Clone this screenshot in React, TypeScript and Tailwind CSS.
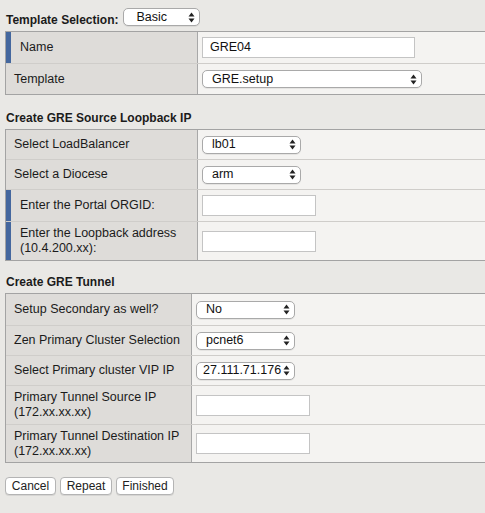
import type { ReactNode } from "react";

function Arrows() {
  return (
    <svg width="7" height="11" viewBox="0 0 7 11" className="shrink-0">
      <path d="M3.5 0.5 L6.5 4.5 L0.5 4.5 Z" fill="#222" />
      <path d="M3.5 10.5 L6.5 6.5 L0.5 6.5 Z" fill="#222" />
    </svg>
  );
}

function Select({ value, w, pl = "pl-[9px]" }: { value: string; w: string; pl?: string }) {
  return (
    <div
      className={`${w} ${pl} flex h-[18px] items-center justify-between gap-[2px] rounded-[5px] border border-[#a9a9a9] bg-white pr-[4px] text-[12.5px] leading-none text-[#111] shadow-[0_1px_0_rgba(0,0,0,0.06)]`}
    >
      <span className="whitespace-nowrap">{value}</span>
      <Arrows />
    </div>
  );
}

function Input({ value = "", w }: { value?: string; w: string }) {
  return (
    <div className={`${w} flex h-[21px] items-center border border-[#c4c4c4] bg-white px-[7px] text-[12.5px] text-[#111]`}>
      {value}
    </div>
  );
}

function Row({
  label,
  h,
  labelW,
  marked,
  last,
  children,
}: {
  label: ReactNode;
  h: string;
  labelW: string;
  marked?: boolean;
  last?: boolean;
  children: ReactNode;
}) {
  return (
    <div className={`flex ${h} ${last ? "" : "border-b border-[#cfcdca]"}`}>
      <div className={`${labelW} flex shrink-0 items-stretch border-r border-[#a8a8a8] bg-[#dedcd9]`}>
        {marked ? <div className="w-[5px] shrink-0 bg-[#44679e]" /> : null}
        <div className={`flex items-center leading-[15px] ${marked ? "pl-[9px]" : "pl-[8px]"}`}>{label}</div>
      </div>
      <div className="flex flex-1 items-center bg-[#f4f3f1] pl-[4px]">{children}</div>
    </div>
  );
}

function Table({ children }: { children: ReactNode }) {
  return (
    <div className="ml-[5px] w-[520px] border-y border-l border-[#a3a3a3]">{children}</div>
  );
}

function Heading({ children, mt }: { children: ReactNode; mt: string }) {
  return <div className={`${mt} mb-[3px] pl-[6px] text-[12px] font-bold leading-[16px]`}>{children}</div>;
}

export default function App() {
  return (
    <div className="min-h-[513px] overflow-hidden bg-[#e9e8e5] pt-[8px] font-['Liberation_Sans',Arial,sans-serif] text-[12.5px] text-[#1b1b1b]">
      <div className="flex h-[18px] items-center pl-[6px]">
        <span className="mt-[6px] text-[12px] font-bold">Template Selection:</span>
        <div className="ml-[5px]">
          <Select value="Basic" w="w-[77px]" pl="pl-[12px]" />
        </div>
      </div>

      <div className="mt-[5px]">
        <Table>
          <Row label="Name" h="h-[32px]" labelW="w-[192px]" marked>
            <Input value="GRE04" w="w-[213px]" />
          </Row>
          <Row label="Template" h="h-[30px]" labelW="w-[192px]" last>
            <Select value="GRE.setup" w="w-[220px]" />
          </Row>
        </Table>
      </div>

      <Heading mt="mt-[15px]">Create GRE Source Loopback IP</Heading>
      <Table>
        <Row label="Select LoadBalancer" h="h-[30px]" labelW="w-[192px]">
          <Select value="lb01" w="w-[99px]" />
        </Row>
        <Row label="Select a Diocese" h="h-[30px]" labelW="w-[192px]">
          <Select value="arm" w="w-[99px]" />
        </Row>
        <Row label="Enter the Portal ORGID:" h="h-[32px]" labelW="w-[192px]" marked>
          <Input w="w-[114px]" />
        </Row>
        <Row
          label={
            <span>
              Enter the Loopback address
              <br />
              (10.4.200.xx):
            </span>
          }
          h="h-[38px]"
          labelW="w-[192px]"
          marked
          last
        >
          <Input w="w-[114px]" />
        </Row>
      </Table>

      <Heading mt="mt-[13px]">Create GRE Tunnel</Heading>
      <Table>
        <Row label="Setup Secondary as well?" h="h-[32px]" labelW="w-[186px]">
          <Select value="No" w="w-[99px]" />
        </Row>
        <Row label="Zen Primary Cluster Selection" h="h-[30px]" labelW="w-[186px]">
          <Select value="pcnet6" w="w-[99px]" />
        </Row>
        <Row label="Select Primary cluster VIP IP" h="h-[30px]" labelW="w-[186px]">
          <Select value="27.111.71.176" w="w-[99px]" pl="pl-[6px]" />
        </Row>
        <Row
          label={
            <span>
              Primary Tunnel Source IP
              <br />
              (172.xx.xx.xx)
            </span>
          }
          h="h-[39px]"
          labelW="w-[186px]"
        >
          <Input w="w-[114px]" />
        </Row>
        <Row
          label={
            <span>
              Primary Tunnel Destination IP
              <br />
              (172.xx.xx.xx)
            </span>
          }
          h="h-[37px]"
          labelW="w-[186px]"
          last
        >
          <Input w="w-[114px]" />
        </Row>
      </Table>

      <div className="mt-[14px] flex gap-[4px] pl-[5px]">
        {[
          ["Cancel", "w-[51px]"],
          ["Repeat", "w-[52px]"],
          ["Finished", "w-[58px]"],
        ].map(([b, w]) => (
          <button
            key={b}
            className={`${w} h-[18px] rounded-[4px] border border-[#b4b4b4] bg-white text-[12px] leading-none text-[#222] shadow-[0_1px_0_rgba(0,0,0,0.08)]`}
          >
            {b}
          </button>
        ))}
      </div>
    </div>
  );
}
